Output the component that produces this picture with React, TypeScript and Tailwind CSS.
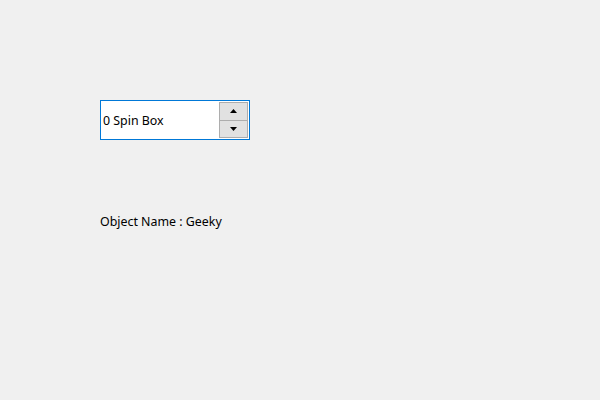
import React from "react";

export default function App() {
  return (
    <div
      className="w-[600px] h-[400px] bg-[#f0f0f0] pt-[100px] pl-[100px] flex flex-col items-start text-black"
      style={{ fontFamily: '"Noto Sans", "DejaVu Sans", sans-serif' }}
    >
      <div className="w-[150px] h-[40px] border border-[#0078d7] bg-white flex items-stretch">
        <div className="flex-1 flex items-center pl-[2px] pt-[2px] text-[12.4px] leading-none">0 Spin Box</div>
        <div className="w-[30px] flex flex-col py-[1px] pr-[1px]">
          <div className="h-[19px] border border-[#adadad] bg-[#e1e1e1] flex items-center justify-center">
            <svg width="7" height="4" viewBox="0 0 7 4"><polygon points="3.5,0 7,4 0,4" fill="#000" /></svg>
          </div>
          <div className="h-[18px] border border-t-0 border-[#adadad] bg-[#e1e1e1] flex items-center justify-center">
            <svg width="7" height="4" viewBox="0 0 7 4"><polygon points="0,0 7,0 3.5,4" fill="#000" /></svg>
          </div>
        </div>
      </div>
      <div className="mt-[72px] text-[12.4px] leading-[20px]">Object Name : Geeky</div>
    </div>
  );
}
